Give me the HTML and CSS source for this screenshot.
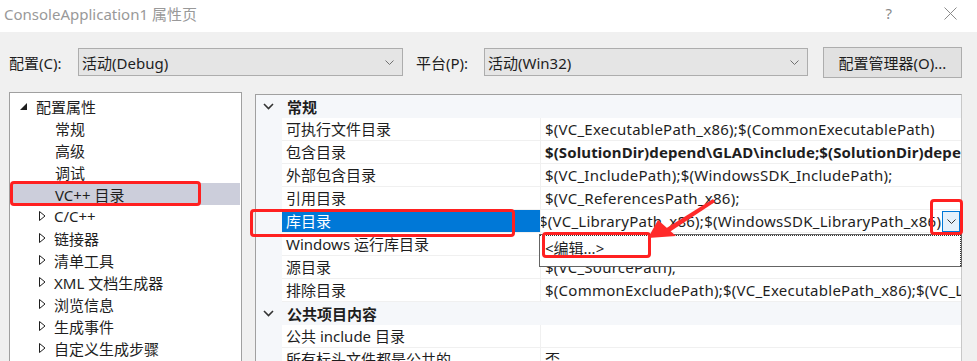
FILE: index.html
```html
<!DOCTYPE html>
<html lang="zh-CN">
<head>
    <meta charset="UTF-8">
    <title>ConsoleApplication1 属性页</title>
    <link rel="stylesheet" href="styles.css">
</head>
<body>
    <div class="window">
        <div class="titlebar">
            <span class="title">ConsoleApplication1 属性页</span>
            <span class="help">?</span>
            <svg class="close" width="13" height="13" viewBox="0 0 13 13"><path d="M0.5 0.5 L12.5 12.5 M12.5 0.5 L0.5 12.5" stroke="#8a8a8a" stroke-width="1" fill="none"/></svg>
        </div>

        <div class="toolbar">
            <label class="tb-label">配置(C):</label>
            <div class="combo combo-config">
                <span>活动(Debug)</span>
                <svg class="chev" width="9" height="5" viewBox="0 0 9 5"><path d="M0.5 0.5 L4.5 4.5 L8.5 0.5" stroke="#707070" fill="none"/></svg>
            </div>
            <label class="tb-label tb-label-platform">平台(P):</label>
            <div class="combo combo-platform">
                <span>活动(Win32)</span>
                <svg class="chev" width="9" height="5" viewBox="0 0 9 5"><path d="M0.5 0.5 L4.5 4.5 L8.5 0.5" stroke="#707070" fill="none"/></svg>
            </div>
            <button class="btn-manager">配置管理器(O)...</button>
        </div>

        <div class="main">
            <!-- 左侧树 -->
            <div class="tree">
                <div class="tree-row root">
                    <svg class="tri" width="8" height="8" viewBox="0 0 8 8"><path d="M7 0 L7 7 L0 7 Z" fill="#1e1e1e"/></svg>
                    <span>配置属性</span>
                </div>
                <div class="tree-row leaf"><span>常规</span></div>
                <div class="tree-row leaf"><span>高级</span></div>
                <div class="tree-row leaf"><span>调试</span></div>
                <div class="tree-row leaf selected"><span>VC++ 目录</span></div>
                <div class="tree-row node"><svg class="tri" width="7" height="10" viewBox="0 0 7 10"><path d="M0.5 0.5 L6 5 L0.5 9.5 Z" stroke="#1e1e1e" fill="none"/></svg><span>C/C++</span></div>
                <div class="tree-row node"><svg class="tri" width="7" height="10" viewBox="0 0 7 10"><path d="M0.5 0.5 L6 5 L0.5 9.5 Z" stroke="#1e1e1e" fill="none"/></svg><span>链接器</span></div>
                <div class="tree-row node"><svg class="tri" width="7" height="10" viewBox="0 0 7 10"><path d="M0.5 0.5 L6 5 L0.5 9.5 Z" stroke="#1e1e1e" fill="none"/></svg><span>清单工具</span></div>
                <div class="tree-row node"><svg class="tri" width="7" height="10" viewBox="0 0 7 10"><path d="M0.5 0.5 L6 5 L0.5 9.5 Z" stroke="#1e1e1e" fill="none"/></svg><span>XML 文档生成器</span></div>
                <div class="tree-row node"><svg class="tri" width="7" height="10" viewBox="0 0 7 10"><path d="M0.5 0.5 L6 5 L0.5 9.5 Z" stroke="#1e1e1e" fill="none"/></svg><span>浏览信息</span></div>
                <div class="tree-row node"><svg class="tri" width="7" height="10" viewBox="0 0 7 10"><path d="M0.5 0.5 L6 5 L0.5 9.5 Z" stroke="#1e1e1e" fill="none"/></svg><span>生成事件</span></div>
                <div class="tree-row node"><svg class="tri" width="7" height="10" viewBox="0 0 7 10"><path d="M0.5 0.5 L6 5 L0.5 9.5 Z" stroke="#1e1e1e" fill="none"/></svg><span>自定义生成步骤</span></div>
            </div>

            <!-- 右侧属性表 -->
            <div class="grid">
                <div class="section">
                    <svg class="sec-chev" width="11" height="7" viewBox="0 0 11 7"><path d="M1 1 L5.5 5.5 L10 1" stroke="#333" stroke-width="1.6" fill="none"/></svg>
                    <span>常规</span>
                </div>
                <div class="prop"><div class="gutter"></div><div class="name">可执行文件目录</div><div class="value">$(VC_ExecutablePath_x86);$(CommonExecutablePath)</div></div>
                <div class="prop"><div class="gutter"></div><div class="name">包含目录</div><div class="value bold">$(SolutionDir)depend\GLAD\include;$(SolutionDir)depend\GLFW\include;$(IncludePath)</div></div>
                <div class="prop"><div class="gutter"></div><div class="name">外部包含目录</div><div class="value">$(VC_IncludePath);$(WindowsSDK_IncludePath);</div></div>
                <div class="prop"><div class="gutter"></div><div class="name">引用目录</div><div class="value">$(VC_ReferencesPath_x86);</div></div>
                <div class="prop active">
                    <div class="gutter"></div>
                    <div class="name">库目录</div>
                    <div class="value editing">
                        <span class="edit-text">$(VC_LibraryPath_x86);$(WindowsSDK_LibraryPath_x86)</span>
                        <span class="drop-btn"><svg width="9" height="5" viewBox="0 0 9 5"><path d="M0.5 0.5 L4.5 4.5 L8.5 0.5" stroke="#333" fill="none"/></svg></span>
                    </div>
                </div>
                <div class="prop"><div class="gutter"></div><div class="name">Windows 运行库目录</div><div class="value"></div></div>
                <div class="prop"><div class="gutter"></div><div class="name">源目录</div><div class="value">$(VC_SourcePath);</div></div>
                <div class="prop"><div class="gutter"></div><div class="name">排除目录</div><div class="value">$(CommonExcludePath);$(VC_ExecutablePath_x86);$(VC_LibraryPath_x86)</div></div>
                <div class="section">
                    <svg class="sec-chev" width="11" height="7" viewBox="0 0 11 7"><path d="M1 1 L5.5 5.5 L10 1" stroke="#333" stroke-width="1.6" fill="none"/></svg>
                    <span>公共项目内容</span>
                </div>
                <div class="prop"><div class="gutter"></div><div class="name">公共 include 目录</div><div class="value"></div></div>
                <div class="prop"><div class="gutter"></div><div class="name">所有标头文件都是公共的</div><div class="value">否</div></div>
            </div>
        </div>

        <!-- 下拉列表 -->
        <div class="dropdown">
            <div class="dropdown-item">&lt;编辑...&gt;</div>
        </div>

        <!-- 红色标注 -->
        <div class="mark mark-tree"></div>
        <div class="mark mark-name"></div>
        <div class="mark mark-btn"></div>
        <div class="mark mark-edit"></div>
        <svg class="arrow" width="977" height="361" viewBox="0 0 977 361">
            <path d="M713 199 L715 202 L668 233 L665 229 Z" fill="#ff2a2a"/>
            <path d="M648 238 L658 220 L676 236 Z" fill="#ff2a2a"/>
        </svg>
    </div>
</body>
</html>
```

FILE: styles.css
```css
* {
    margin: 0;
    padding: 0;
    box-sizing: border-box;
}

body {
    background: #f0f0f0;
    font-family: "Noto Sans", "Noto Sans CJK SC", sans-serif;
    font-size: 15px;
    color: #1e1e1e;
    overflow: hidden;
}

.window {
    position: relative;
    width: 977px;
    height: 361px;
    overflow: hidden;
}

.titlebar {
    height: 32px;
    background: #fff;
    display: flex;
    align-items: center;
    padding-left: 4px;
    padding-bottom: 6px;
}

.title {
    color: #999;
    flex: 1;
}

.help {
    color: #8a8a8a;
    font-size: 15px;
    margin-right: 52px;
}

.close {
    margin-right: 20px;
}

.toolbar {
    height: 60px;
    display: flex;
    align-items: center;
    padding-left: 9px;
}

.tb-label {
    width: 69px;
}

.tb-label-platform {
    width: 68px;
    margin-left: 13px;
}

.combo {
    height: 28px;
    background: #e5e5e5;
    border: 1px solid #adadad;
    display: flex;
    align-items: center;
    padding-left: 3px;
    padding-right: 8px;
    justify-content: space-between;
}

.combo-config {
    width: 325px;
}

.combo-platform {
    width: 324px;
}

.btn-manager {
    margin-left: 15px;
    width: 139px;
    height: 31px;
    background: #e1e1e1;
    border: 1px solid #adadad;
    font: inherit;
    color: #1e1e1e;
}

.main {
    display: flex;
    align-items: flex-start;
    padding-left: 9px;
    gap: 13px;
}

.tree {
    width: 233px;
    height: 280px;
    background: #fff;
    border: 1px solid #a0a0a0;
    padding: 2px 1px 0;
}

.tree-row {
    height: 22px;
    display: flex;
    align-items: center;
    white-space: nowrap;
}

.tree-row.root {
    padding-left: 9px;
}

.tree-row.root .tri {
    margin-right: 8px;
    margin-top: 1px;
}

.tree-row.leaf {
    padding-left: 44px;
}

.tree-row.node {
    padding-left: 28px;
}

.tree-row.node .tri {
    margin-right: 8px;
}

.tree-row.selected {
    background: #cccedb;
}

.grid {
    margin-top: 2px;
    width: 707px;
    height: 280px;
    background: #fff;
    border: 1px solid #a0a0a0;
    border-right-color: #c8c8c8;
    overflow: hidden;
}

.section {
    height: 23px;
    background: #f5f7fa;
    display: flex;
    align-items: center;
    font-weight: bold;
    padding-left: 7px;
}

.sec-chev {
    margin-right: 13px;
}

.prop {
    display: grid;
    grid-template-columns: 26px 259px 1fr;
    height: 23px;
}

.gutter {
    background: #f5f7fa;
}

.name,
.value {
    border-bottom: 1px solid #f0f0f0;
    padding-left: 4px;
    line-height: 22px;
    white-space: nowrap;
    overflow: hidden;
}

.name {
    border-right: 1px solid #f0f0f0;
}

.value {
    letter-spacing: 0.25px;
}

.value.bold {
    font-weight: bold;
    letter-spacing: 0.1px;
}

.prop.active .name {
    background: #0078d7;
    color: #fff;
}

.value.editing {
    display: flex;
    align-items: center;
    padding-left: 0;
}

.edit-text {
    flex: 1;
    overflow: hidden;
    margin-left: -2px;
}

.drop-btn {
    width: 18px;
    height: 21px;
    margin-right: 1px;
    background: #e5f1fb;
    border: 1px solid #0078d7;
    display: flex;
    align-items: center;
    justify-content: center;
}

.dropdown {
    position: absolute;
    left: 539px;
    top: 234px;
    width: 423px;
    height: 33px;
    background: #fff;
    border: 1px solid #646464;
}

.dropdown-item {
    height: 31px;
    border: 1px dotted #333;
    border-left: none;
    border-bottom: none;
    padding-left: 5px;
    line-height: 24px;
}

.mark {
    position: absolute;
    border: 3px solid #ff2020;
    border-radius: 4px;
}

.mark-tree {
    left: 10px;
    top: 181px;
    width: 191px;
    height: 25px;
}

.mark-name {
    left: 250px;
    top: 209px;
    width: 265px;
    height: 28px;
}

.mark-btn {
    left: 930px;
    top: 199px;
    width: 33px;
    height: 36px;
}

.mark-edit {
    left: 542px;
    top: 232px;
    width: 109px;
    height: 26px;
}

.arrow {
    position: absolute;
    left: 0;
    top: 0;
}
```
